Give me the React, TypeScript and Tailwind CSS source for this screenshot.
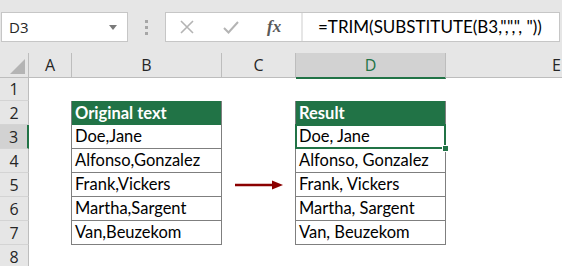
import React from 'react';

const LEFT = ['Doe,Jane', 'Alfonso,Gonzalez', 'Frank,Vickers', 'Martha,Sargent', 'Van,Beuzekom'];
const RIGHT = ['Doe, Jane', 'Alfonso, Gonzalez', 'Frank, Vickers', 'Martha, Sargent', 'Van, Beuzekom'];

const cellFont = { fontFamily: 'Lato, "Open Sans", sans-serif' };
const uiFont = { fontFamily: '"Open Sans", "Noto Sans", sans-serif' };

const RowHead: React.FC<{ n: number; active?: boolean; h: string }> = ({ n, active, h }) => (
  <div
    className={`${h} w-[29px] flex items-center justify-center border-b border-[#d4d4d4] text-[16px] text-[#262626] ${
      active ? 'bg-[#d2d2d2] border-r-2 border-r-[#217346]' : 'bg-[#e6e6e6] border-r border-r-[#bdbdbd]'
    }`}
    style={uiFont}
  >
    {n}
  </div>
);

const TableCell: React.FC<{ text: string; head?: boolean; selected?: boolean }> = ({ text, head, selected }) => (
  <div
    className={`relative h-[24px] flex items-center pl-[3px] text-[16.5px] leading-none ${
      head
        ? 'bg-[#217346] text-white font-bold border-x border-[#7f7f7f]'
        : 'bg-white text-black border-x border-b border-[#7f7f7f]'
    } ${selected ? 'z-10' : ''}`}
    style={cellFont}
  >
    {text}
    {selected && (
      <>
        <div className="absolute -left-px -top-px -right-px -bottom-px border-2 border-[#217346]" />
        <div className="absolute -right-[4px] -bottom-[4px] w-[7px] h-[7px] bg-[#217346] border border-white" />
      </>
    )}
  </div>
);

export default function App() {
  const rows = [1, 2, 3, 4, 5, 6, 7, 8];
  return (
    <div className="w-[562px] h-[266px] overflow-hidden bg-white select-none">
      {/* formula bar */}
      <div className="h-[53px] bg-[#e6e6e6] flex items-start pt-[12px] pl-[1px]">
        <div
          className="w-[127px] h-[30px] bg-white border border-[#c6c6c6] flex items-center justify-between pl-[7px] pr-[10px] text-[15px] text-[#262626]"
          style={uiFont}
        >
          <span>D3</span>
          <svg width="8" height="5" viewBox="0 0 8 5">
            <path d="M0 0 H8 L4 5 Z" fill="#7a7a7a" />
          </svg>
        </div>
        <div className="w-[37px] h-[30px] flex flex-col items-center justify-center gap-[3px]">
          <span className="w-[3px] h-[3px] bg-[#a6a6a6]" />
          <span className="w-[3px] h-[3px] bg-[#a6a6a6]" />
          <span className="w-[3px] h-[3px] bg-[#a6a6a6]" />
        </div>
        <div className="flex-1 h-[30px] mr-[2px] bg-white border border-[#c6c6c6] flex items-center">
          <div className="w-[137px] h-full flex items-center pl-[13px] gap-[28px] border-r-2 border-[#e6e6e6]">
            <svg width="16" height="14" viewBox="0 0 16 14">
              <path d="M2 1 L14 13 M14 1 L2 13" stroke="#b4b4b4" strokeWidth="1.6" fill="none" />
            </svg>
            <svg width="16" height="14" viewBox="0 0 16 14">
              <path d="M1 8 L5.5 12.5 L15 2" stroke="#b4b4b4" strokeWidth="2" fill="none" />
            </svg>
            <span className="text-[17px] italic text-[#595959] font-semibold" style={{ fontFamily: '"Liberation Serif", serif' }}>
              fx
            </span>
          </div>
          <div className="pl-[15px] text-[17px] text-black whitespace-pre" style={cellFont}>
            =TRIM(SUBSTITUTE(B3,&quot;,&quot;,&quot;, &quot;))
          </div>
        </div>
      </div>

      {/* column headers */}
      <div className="flex h-[25px] bg-[#e6e6e6] border-b border-[#bdbdbd] text-[16px] text-[#262626]" style={uiFont}>
        <div className="w-[29px] h-full border-r border-[#bdbdbd] flex items-end justify-end pr-[3px] pb-[3px]">
          <svg width="15" height="15" viewBox="0 0 15 15">
            <path d="M15 0 V15 H0 Z" fill="#b4b4b4" />
          </svg>
        </div>
        <div className="w-[43px] border-r border-[#bdbdbd] flex items-center justify-center">A</div>
        <div className="w-[150px] border-r border-[#bdbdbd] flex items-center justify-center">B</div>
        <div className="w-[74px] border-r border-[#bdbdbd] flex items-center justify-center">C</div>
        <div className="w-[150px] h-[26px] bg-[#d2d2d2] border-r border-[#bdbdbd] border-b-2 border-b-[#217346] flex items-center justify-center text-[#217346]">
          D
        </div>
        <div className="flex-1 flex items-center justify-end pr-[1px]">E</div>
      </div>

      {/* grid body */}
      <div className="flex">
        <div className="flex flex-col">
          {rows.map((n) => (
            <RowHead key={n} n={n} active={n === 3} h={n === 1 ? 'h-[23px]' : 'h-[24px]'} />
          ))}
        </div>
        <div className="flex-1 flex flex-col">
          <div className="h-[23px]" />
          <div className="flex">
            <div className="w-[43px]" />
            <div className="w-[151px] -ml-px flex flex-col">
              <TableCell text="Original text" head />
              {LEFT.map((t) => (
                <TableCell key={t} text={t} />
              ))}
            </div>
            <div className="w-[73px] flex flex-col">
              <div className="h-[72px]" />
              <div className="h-[24px] flex items-center pl-[13px]">
                <svg width="48" height="10" viewBox="0 0 48 10">
                  <path d="M0 5 H38" stroke="#8b0000" strokeWidth="2.4" />
                  <path d="M37 0.5 L48 5 L37 9.5 Z" fill="#8b0000" />
                </svg>
              </div>
            </div>
            <div className="w-[151px] flex flex-col">
              <TableCell text="Result" head />
              {RIGHT.map((t, i) => (
                <TableCell key={t} text={t} selected={i === 0} />
              ))}
            </div>
          </div>
        </div>
      </div>
    </div>
  );
}
